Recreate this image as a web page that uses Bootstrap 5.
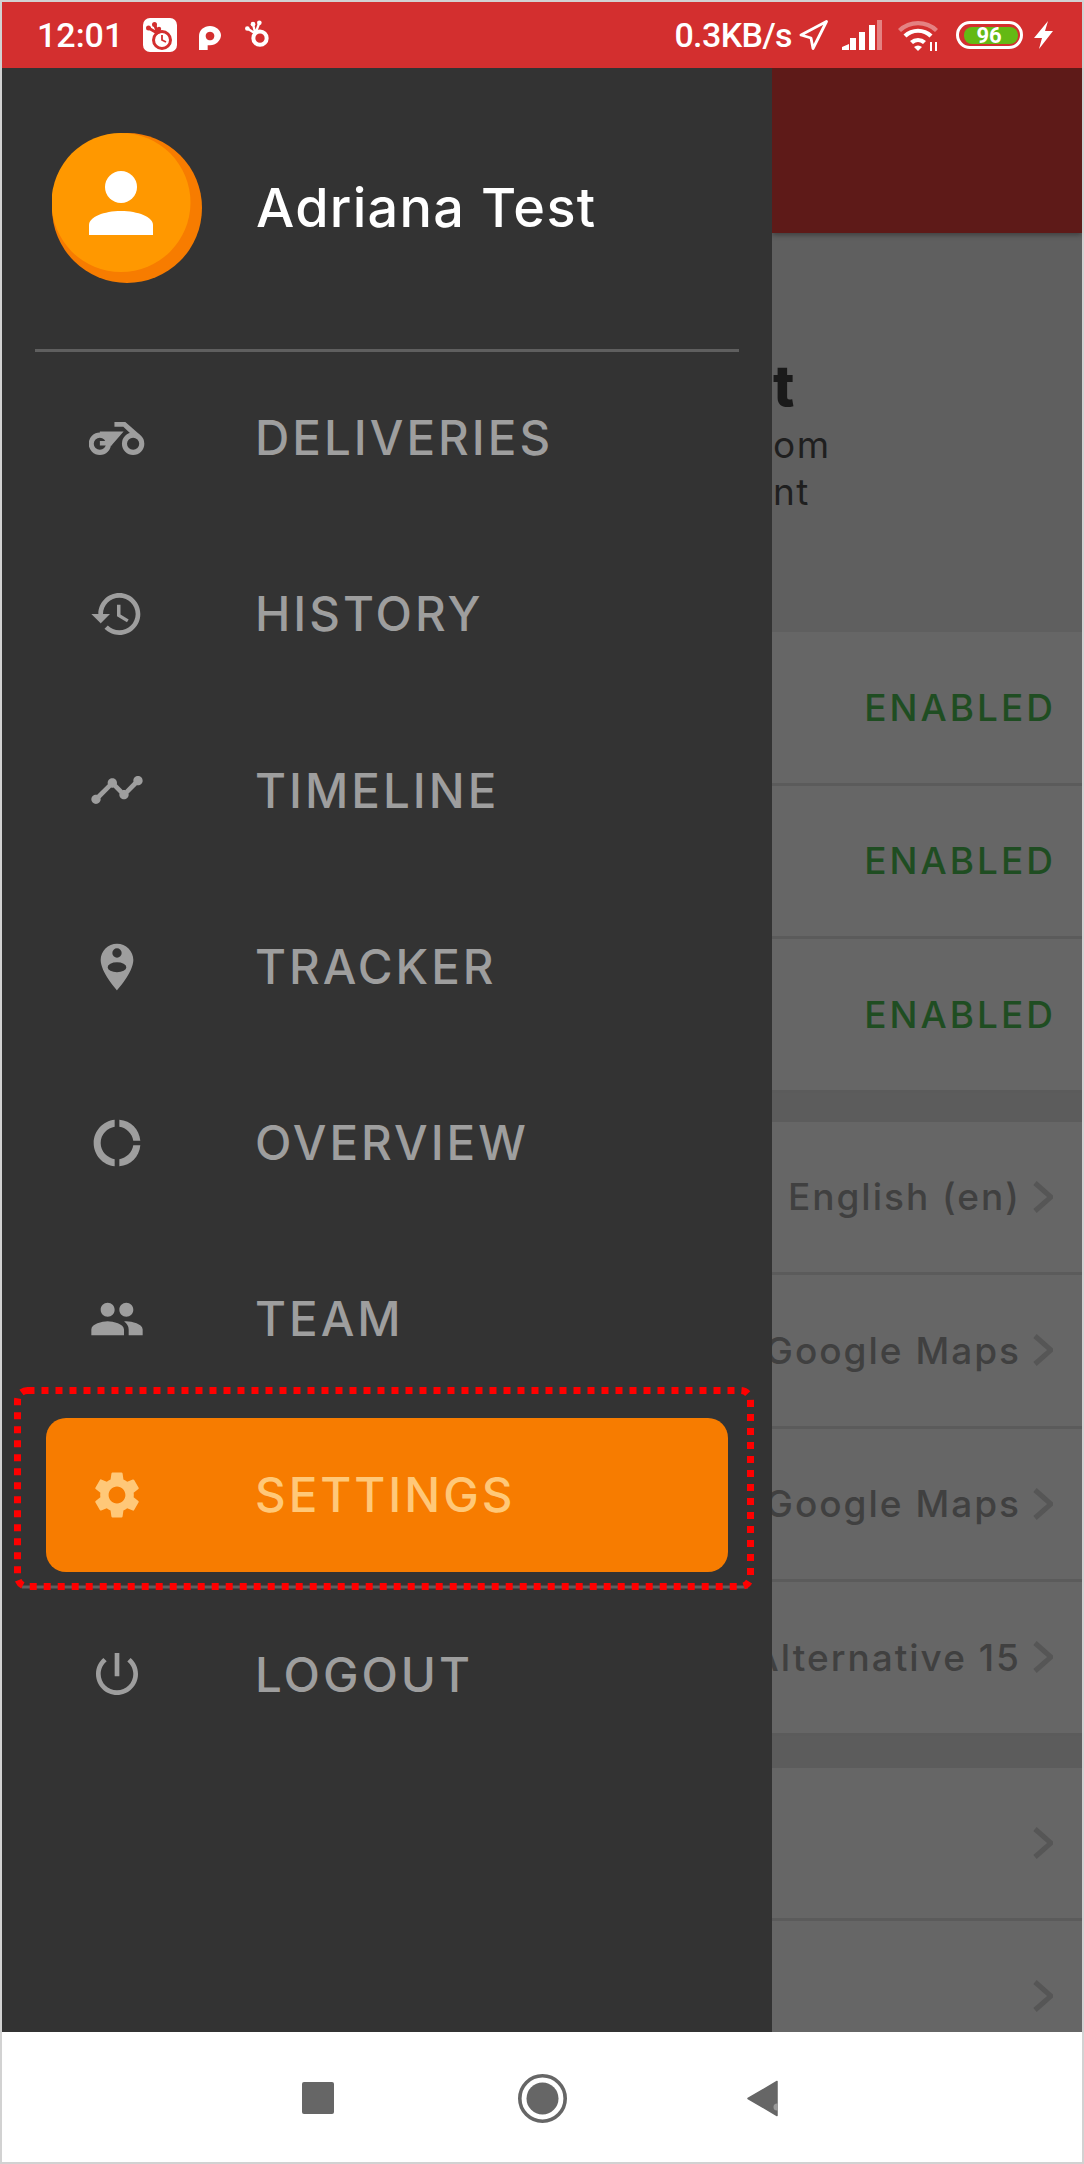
<!DOCTYPE html>
<html>
<head>
    <title>Settings drawer</title>
    <link href="https://cdn.jsdelivr.net/npm/bootstrap@5.3.0/dist/css/bootstrap.min.css" rel="stylesheet">
    <style>
        html, body { height: 100%; margin: 0; background: #d2d2d2; }
        body { font-family: "Inter", "Liberation Sans", sans-serif; overflow: hidden; }
        .phone { width: 1080px; height: 2160px; margin: 2px 0 0 2px; background: #fff; }

        .status-bar { height: 66px; background: #d32f2f; color: #fff; padding: 0 29px 0 35px; font-family: "Roboto", sans-serif; font-weight: 500; font-size: 34px; flex: none; }
        .status-speed { margin-left: auto; margin-right: 7px; letter-spacing: -.6px; }
        .st-clock { margin-left: 20px; }
        .st-p { margin-left: 22px; margin-top: 6px; }
        .st-ring { margin-left: 24px; margin-top: -3px; }
        .st-signal { margin-left: 14px; }
        .st-wifi { margin-left: 16px; }
        .st-battery { margin-left: 16px; }
        .st-bolt { margin-left: 11px; }

        .main-area { height: 1964px; flex: none; }

        .drawer { width: 770px; background: #333; flex: none; position: relative; }
        .drawer-head { height: 281px; padding: 65px 0 0 50px; }
        .avatar-svg { width: 150px; height: 150px; flex: none; }
        .drawer-name { color: #fff; font-size: 54px; font-weight: 500; margin-left: 54px; line-height: 150px; letter-spacing: 1.3px; }
        .drawer-line { height: 3px; background: #5f5f5f; margin: 0 33px; }
        .menu-rows { padding: 9px 44px 0 44px; gap: 22.2px; }
        .menu-row { height: 154px; border-radius: 20px; color: #9e9e9e; font-size: 47.5px; font-weight: 500; letter-spacing: 3px; }
        .menu-row svg { width: 56px; height: 56px; fill: currentColor; margin-left: 43px; flex: none; }
        .menu-row svg.bike-svg { height: 33px; }
        .menu-row .menu-text { margin-left: 110px; line-height: 1; }
        .menu-row.is-active { background: #f77c00; color: #ffc878; }
        .menu-row.row-last { margin-top: 3px; }
        .callout { position: absolute; left: 12px; top: 1319px; width: 740px; height: 203px; }

        .under { min-width: 0; overflow: hidden; background: #666; }
        .under-top { height: 165px; background: #5e1a18; box-shadow: 0 2px 5px rgba(0,0,0,.35); position: relative; flex: none; }
        .under-hero { height: 399px; background: #5f5f5f; color: #1f1f1f; padding-left: 1px; flex: none; font-size: 37px; line-height: 47px; letter-spacing: 1.5px; }
        .hero-title { font-size: 56px; font-weight: 800; color: #1a1a1a; line-height: 54px; margin-top: 126px; margin-bottom: 8px; letter-spacing: 0; }
        .under-row { height: 153.5px; flex: none; border-bottom: 3px solid #5b5b5b; padding-right: 29px; color: #404040; font-size: 37px; font-weight: 500; letter-spacing: 2px; white-space: nowrap; }
        .under-row.on-state { color: #1f4d22; letter-spacing: 3px; padding-right: 26px; }
        .under-gap { height: 29px; flex: none; background: #5c5c5c; }
        .under-gap.gap-wide { height: 32px; }
        .chev { width: 20px; height: 32px; margin-left: 12px; flex: none; fill: none; stroke: #565656; stroke-width: 5; }

        .nav-bar { height: 130px; background: #fff; flex: none; padding-top: 2px; }
        .nav-square { width: 32px; height: 32px; border-radius: 2px; background: #666; margin-left: 300px; }
        .nav-home { width: 49px; height: 49px; margin-left: 184px; }
        .nav-back { width: 31px; height: 37px; margin-left: 180px; }
    </style>
</head>
<body>
<div class="phone d-flex flex-column">
    <div class="status-bar d-flex align-items-center">
        <span>12:01</span>
        <svg class="st-clock" width="34" height="34" viewBox="0 0 34 34"><rect width="34" height="34" rx="7" fill="#fff"/><circle cx="19" cy="22" r="8.500" fill="#fff" stroke="#d32f2f" stroke-width="3"/><path d="M19 17v5l4 2" stroke="#d32f2f" stroke-width="1.800" fill="none"/><path d="M5.500 10L15 15.500M11.500 6.500L15 15.500M16 11.500L15 15.500" stroke="#d32f2f" stroke-width="3"/><circle cx="5.500" cy="10" r="2.500" fill="#d32f2f"/><circle cx="11.500" cy="6.500" r="2.500" fill="#d32f2f"/><circle cx="16" cy="11" r="2.200" fill="#d32f2f"/></svg>
        <svg class="st-p" width="22" height="24" viewBox="0 0 66 72"><path d="M0 72V30C0 13 15 0 33 0s33 13 33 28-15 30-33 30h-7v14zM33 17a13 13 0 1 0 .01 0z" fill="#fff" fill-rule="evenodd"/></svg>
        <svg class="st-ring" width="25" height="27" viewBox="0 0 75 80"><circle cx="45" cy="54" r="20" fill="none" stroke="#fff" stroke-width="12"/><path d="M7 25l24 15M24 12l7 28M43 8l-12 32" stroke="#fff" stroke-width="7"/><circle cx="7" cy="25" r="7" fill="#fff"/><circle cx="24" cy="12" r="7" fill="#fff"/><circle cx="43" cy="8" r="7" fill="#fff"/></svg>
        <span class="status-speed">0.3KB/s</span>
        <svg width="29" height="30" viewBox="0 0 29 30"><path d="M27.500 1.500L2 15l10 3 2 10.500z" fill="none" stroke="#fff" stroke-width="2.800" stroke-linejoin="round"/></svg>
        <svg class="st-signal" width="40" height="30" viewBox="0 0 40 30"><path d="M0 30v-3l7-3v6zM8 30V18h6v12zM17 30V12h6v18zM27 30V5h6v25z" fill="#fff"/><path d="M35 30V0h5v30z" fill="#fff" opacity=".4"/></svg>
        <svg class="st-wifi" width="42" height="31" viewBox="0 0 42 31"><path d="M0 9a29 29 0 0 1 40 0l-3 3a25 25 0 0 0-34 0z" fill="#fff" opacity=".4"/><path d="M5.500 14.500a21 21 0 0 1 29 0l-3 3a16.500 16.500 0 0 0-23 0z" fill="#fff"/><path d="M12 21a12 12 0 0 1 16 0l-3 3a8 8 0 0 0-10 0z" fill="#fff"/><path d="M20 31l-4-4a6 6 0 0 1 8 0z" fill="#fff"/><path d="M33 22v9M38 22v9" stroke="#fff" stroke-width="2"/></svg>
        <svg class="st-battery" width="67" height="28" viewBox="0 0 67 28"><rect x="1.500" y="1.500" width="64" height="25" rx="12.500" fill="none" stroke="#fff" stroke-width="3"/><rect x="8" y="6" width="54" height="17" rx="8" fill="#64b914"/><text x="33" y="22" text-anchor="middle" font-family="Roboto, sans-serif" font-size="22" font-weight="700" fill="#fff">96</text></svg>
        <svg class="st-bolt" width="19" height="28" viewBox="0 0 19 28"><path d="M14 0L0 17h8L5 28l14-18h-8z" fill="#fff"/></svg>
    </div>

    <div class="main-area d-flex">
        <div class="drawer">
            <div class="drawer-head d-flex align-items-start">
                <svg class="avatar-svg" viewBox="0 0 150 150"><circle cx="75" cy="75" r="75" fill="#f77c00"/><circle cx="69" cy="69.500" r="69.500" fill="#ff9800"/><circle cx="69" cy="54" r="16" fill="#fff"/><path d="M37 102V92c0-8 15-14 32-14s32 6 32 14v10z" fill="#fff"/></svg>
                <div class="drawer-name">Adriana Test</div>
            </div>
            <div class="drawer-line"></div>
            <div class="menu-rows d-flex flex-column">
                <div class="menu-row d-flex align-items-center">
                    <svg class="bike-svg" viewBox="90 70 165 97"><circle cx="122" cy="134" r="25.500" fill="none" stroke="currentColor" stroke-width="15"/><circle cx="220" cy="134" r="25.500" fill="none" stroke="currentColor" stroke-width="15"/><path d="M122 126h36v13h-36zM122 98h70l-36 41-8-19-26-6zM165 70h32l42 37-12 11-36-34h-26z"/></svg>
                    <span class="menu-text">DELIVERIES</span>
                </div>
                <div class="menu-row d-flex align-items-center">
                    <svg viewBox="0 0 24 24"><path d="M13 3c-4.970 0-9 4.030-9 9H1l3.890 3.890.07.14L9 12H6c0-3.870 3.130-7 7-7s7 3.130 7 7-3.130 7-7 7c-1.930 0-3.680-.79-4.940-2.060l-1.420 1.420C8.270 19.990 10.510 21 13 21c4.970 0 9-4.030 9-9s-4.030-9-9-9zm-1 5v5l4.280 2.540.72-1.210-3.500-2.080V8H12z"/></svg>
                    <span class="menu-text">HISTORY</span>
                </div>
                <div class="menu-row d-flex align-items-center">
                    <svg viewBox="0 0 24 24"><path d="M23 8c0 1.100-.9 2-2 2-.18 0-.35-.02-.51-.07l-3.560 3.550c.05.16.07.34.07.52 0 1.100-.9 2-2 2s-2-.9-2-2c0-.18.02-.36.07-.52l-2.550-2.550c-.16.05-.34.07-.52.07s-.36-.02-.52-.07l-4.550 4.560c.05.16.07.33.07.51 0 1.100-.9 2-2 2s-2-.9-2-2 .9-2 2-2c.18 0 .35.02.51.07l4.560-4.550C8.020 9.360 8 9.180 8 9c0-1.100.9-2 2-2s2 .9 2 2c0 .18-.02.36-.07.52l2.550 2.550c.16-.05.34-.07.52-.07s.36.02.52.07l3.550-3.560C19.020 8.350 19 8.180 19 8c0-1.100.9-2 2-2s2 .9 2 2z"/></svg>
                    <span class="menu-text">TIMELINE</span>
                </div>
                <div class="menu-row d-flex align-items-center">
                    <svg viewBox="0 0 24 24"><path fill-rule="evenodd" d="M12 2C8.140 2 5 5.140 5 9c0 5.250 7 13 7 13s7-7.750 7-13c0-3.860-3.140-7-7-7zm0 2a2 2 0 1 1 0 4 2 2 0 0 1 0-4zm0 6a4 2.100 0 1 1 0 4.200 4 2.100 0 0 1 0-4.200z"/></svg>
                    <span class="menu-text">TRACKER</span>
                </div>
                <div class="menu-row d-flex align-items-center">
                    <svg viewBox="0 0 24 24"><path d="M11 5.080V2c-5 .5-9 4.810-9 10s4 9.500 9 10v-3.080c-3-.48-6-3.190-6-6.920s3-6.440 6-6.920zM18.970 11H22c-.47-5-4-8.530-9-9v3.080C16 5.510 18.540 8 18.970 11zM13 18.920V22c5-.47 8.530-4 9-9h-3.030c-.43 3-2.970 5.490-5.970 5.920z"/></svg>
                    <span class="menu-text">OVERVIEW</span>
                </div>
                <div class="menu-row d-flex align-items-center">
                    <svg viewBox="0 0 24 24"><path d="M16 11c1.660 0 2.990-1.340 2.990-3S17.660 5 16 5c-1.660 0-3 1.340-3 3s1.340 3 3 3zm-8 0c1.660 0 2.990-1.340 2.990-3S9.660 5 8 5C6.340 5 5 6.340 5 8s1.340 3 3 3zm0 2c-2.330 0-7 1.170-7 3.500V19h14v-2.500c0-2.330-4.670-3.500-7-3.500zm8 0c-.29 0-.62.02-.97.05 1.160.84 1.970 1.970 1.970 3.450V19h6v-2.500c0-2.330-4.670-3.500-7-3.500z"/></svg>
                    <span class="menu-text">TEAM</span>
                </div>
                <div class="menu-row is-active d-flex align-items-center">
                    <svg viewBox="0 0 24 24"><path d="M19.140 12.940c.04-.3.06-.61.06-.94 0-.32-.02-.64-.07-.94l2.030-1.580c.18-.14.23-.41.12-.61l-1.920-3.320c-.12-.22-.37-.29-.59-.22l-2.390.96c-.5-.38-1.030-.7-1.620-.94L14.400 2.810c-.04-.24-.24-.41-.48-.41h-3.840c-.24 0-.43.17-.47.41L9.250 5.350C8.660 5.590 8.120 5.920 7.630 6.290L5.240 5.330c-.22-.08-.47 0-.59.22L2.740 8.870c-.12.21-.08.47.12.61l2.030 1.580C4.840 11.360 4.800 11.690 4.800 12s.02.64.07.94l-2.030 1.580c-.18.14-.23.41-.12.61l1.920 3.320c.12.22.37.29.59.22l2.390-.96c.5.38 1.030.7 1.620.94l.36 2.540c.05.24.24.41.48.41h3.840c.24 0 .44-.17.47-.41l.36-2.540c.59-.24 1.130-.56 1.620-.94l2.390.96c.22.08.47 0 .59-.22l1.920-3.320c.12-.22.07-.47-.12-.61l-2.010-1.580zM12 15.600c-1.980 0-3.600-1.620-3.600-3.600s1.620-3.600 3.600-3.600 3.600 1.620 3.600 3.600-1.620 3.600-3.600 3.600z"/></svg>
                    <span class="menu-text">SETTINGS</span>
                </div>
                <div class="menu-row row-last d-flex align-items-center">
                    <svg viewBox="0 0 24 24"><path d="M13 3h-2v10h2V3zm4.830 2.170l-1.420 1.420C17.990 7.860 19 9.810 19 12c0 3.870-3.130 7-7 7s-7-3.130-7-7c0-2.190 1.010-4.140 2.580-5.420L6.170 5.170C4.230 6.820 3 9.260 3 12c0 4.970 4.030 9 9 9s9-4.030 9-9c0-2.740-1.230-5.180-3.170-6.830z"/></svg>
                    <span class="menu-text">LOGOUT</span>
                </div>
            </div>
            <svg class="callout" viewBox="0 0 740 203"><path d="M8 200h726" stroke="#5f5f5f" stroke-width="3"/><rect x="3.500" y="3.500" width="733" height="196" rx="10" fill="none" stroke="#f00" stroke-width="7" stroke-dasharray="7 7"/></svg>
        </div>

        <div class="under flex-grow-1 d-flex flex-column">
            <div class="under-top"></div>
            <div class="under-hero">
                <div class="hero-title">t</div>
                <div>om</div>
                <div>nt</div>
            </div>
            <div class="under-row on-state d-flex align-items-center justify-content-end">ENABLED</div>
            <div class="under-row on-state d-flex align-items-center justify-content-end">ENABLED</div>
            <div class="under-row on-state d-flex align-items-center justify-content-end">ENABLED</div>
            <div class="under-gap"></div>
            <div class="under-row d-flex align-items-center justify-content-end"><span>English (en)</span><svg class="chev" viewBox="0 0 20 32"><path d="M2 2l16 14L2 30"/></svg></div>
            <div class="under-row d-flex align-items-center justify-content-end"><span>Google Maps</span><svg class="chev" viewBox="0 0 20 32"><path d="M2 2l16 14L2 30"/></svg></div>
            <div class="under-row d-flex align-items-center justify-content-end"><span>Google Maps</span><svg class="chev" viewBox="0 0 20 32"><path d="M2 2l16 14L2 30"/></svg></div>
            <div class="under-row d-flex align-items-center justify-content-end"><span>Alternative 15</span><svg class="chev" viewBox="0 0 20 32"><path d="M2 2l16 14L2 30"/></svg></div>
            <div class="under-gap gap-wide"></div>
            <div class="under-row d-flex align-items-center justify-content-end"><svg class="chev" viewBox="0 0 20 32"><path d="M2 2l16 14L2 30"/></svg></div>
            <div class="under-row d-flex align-items-center justify-content-end"><svg class="chev" viewBox="0 0 20 32"><path d="M2 2l16 14L2 30"/></svg></div>
        </div>
    </div>

    <div class="nav-bar d-flex align-items-center">
        <div class="nav-square"></div>
        <svg class="nav-home" viewBox="0 0 49 49"><circle cx="24.500" cy="24.500" r="22.700" fill="none" stroke="#666" stroke-width="3.600"/><circle cx="24.500" cy="24.500" r="16" fill="#666"/></svg>
        <svg class="nav-back" viewBox="0 0 31 37"><path d="M30 1.500v34L1 18.500z" fill="#666" stroke="#666" stroke-width="1.500" stroke-linejoin="round"/><circle cx="30" cy="27" r="3.500" fill="#999"/></svg>
    </div>
</div>
</body>
</html>
